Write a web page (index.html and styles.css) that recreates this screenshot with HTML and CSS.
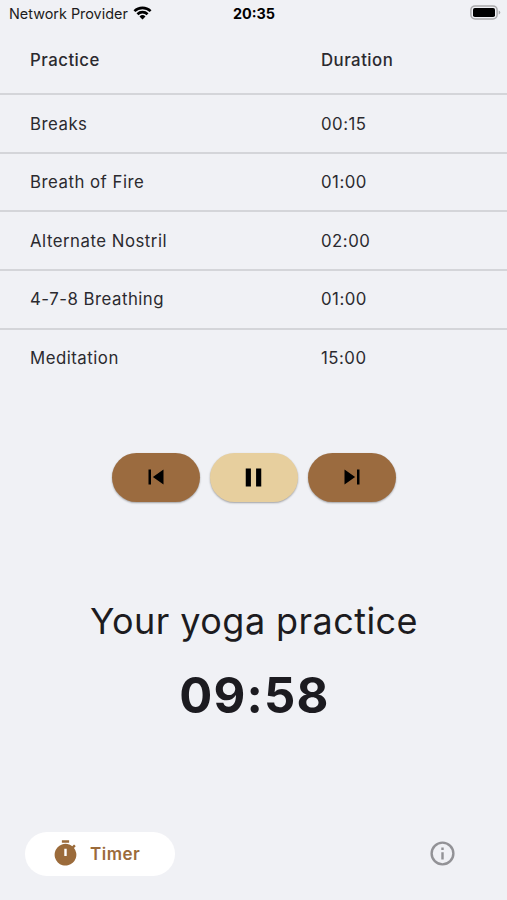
FILE: index.html
```html
<!DOCTYPE html>
<html lang="en">
<head>
<meta charset="utf-8">
<title>Yoga timer</title>
<link rel="stylesheet" href="styles.css">
</head>
<body>
<header class="status">
  <div class="carrier"><span class="carrier-name">Network Provider</span>
    <svg width="19" height="14" viewBox="0 0 18 14"><path d="M0 4.200a13 13 0 0 1 18 0l-1.800 1.900a10.300 10.300 0 0 0-14.400 0zM3 7.300a8.600 8.600 0 0 1 12 0l-1.900 1.900a5.900 5.900 0 0 0-8.200 0zM6 10.400a4.300 4.300 0 0 1 6 0l-3 3z"/></svg>
  </div>
  <span class="clock">20:35</span>
  <svg class="battery" width="31" height="15" viewBox="0 0 31 15"><rect x=".9" y=".9" width="26.200" height="13" rx="4.200" fill="none" stroke="#a9a9ab" stroke-width="1.500"/><rect x="3" y="3" width="22" height="9" rx="1.800"/><path d="M28.700 5.500v4q1.600-.5 1.600-2t-1.600-2z" fill="#a9a9ab"/></svg>
</header>
<main>
  <table class="practices">
    <thead><tr><th>Practice</th><th>Duration</th></tr></thead>
    <tbody>
      <tr><td>Breaks</td><td>00:15</td></tr>
      <tr><td>Breath of Fire</td><td>01:00</td></tr>
      <tr><td>Alternate Nostril</td><td>02:00</td></tr>
      <tr><td>4-7-8 Breathing</td><td>01:00</td></tr>
      <tr><td>Meditation</td><td>15:00</td></tr>
    </tbody>
  </table>
  <div class="controls">
    <button class="control" aria-label="Previous"><svg width="30" height="30" viewBox="0 0 24 24"><path d="M6 6h2v12H6zm3.500 6l8.500 6V6z"/></svg></button>
    <button class="control current" aria-label="Pause"><svg width="31" height="31" viewBox="0 0 24 24"><path d="M6 19h4V5H6zM14 5v14h4V5z"/></svg></button>
    <button class="control" aria-label="Next"><svg width="30" height="30" viewBox="0 0 24 24"><path d="M6 18l8.500-6L6 6zM16 6h2v12h-2z"/></svg></button>
  </div>
  <h1 class="title">Your yoga practice</h1>
  <div class="remaining">09:58</div>
</main>
<nav class="tabs">
  <a class="tab"><svg width="29" height="29" viewBox="0 0 24 24"><path d="M9 1h6v2H9zM19.030 7.390l1.420-1.420c-.43-.51-.9-.99-1.410-1.410l-1.420 1.420A9 9 0 1 0 19.030 7.390zM13 14h-2V8h2z"/></svg><span>Timer</span></a>
  <svg class="info" width="29" height="29" viewBox="0 0 24 24"><path d="M11 7h2v2h-2zm0 4h2v6h-2zm1-9a10 10 0 1 0 0 20 10 10 0 0 0 0-20zm0 18a8 8 0 1 1 0-16 8 8 0 0 1 0 16z"/></svg>
</nav>
</body>
</html>
```
FILE: styles.css
```css
* { box-sizing: border-box; }
body { margin: 0; width: 507px; height: 900px; display: flex; flex-direction: column; overflow: hidden; background: #f0f1f5; color: #1c1b20; font-family: Inter, sans-serif; }
svg { display: block; }
.status { height: 26px; flex: none; display: grid; grid-template-columns: 1fr auto 1fr; align-items: center; padding: 1px 6px 0 9px; color: #000; font-size: 14.400px; }
.carrier { display: flex; align-items: center; gap: 5px; white-space: nowrap; }
.carrier-name { color: #1c1b20; }
.carrier svg { margin-top: -2px; }
.clock { font-weight: 700; margin-right: 2px; }
.battery { justify-self: end; margin-top: -2px; }
main { flex: 1; }
.practices { width: 100%; border-collapse: collapse; table-layout: fixed; font-size: 16.800px; letter-spacing: .5px; }
.practices th, .practices td { height: 58.600px; padding: 0; text-align: left; font-weight: 400; color: #2b2a2f; }
.practices th { height: 68.300px; font-weight: 500; }
.practices th:first-child { width: 321px; }
.practices th:first-child, .practices td:first-child { padding-left: 30px; }
.practices tbody tr { border-top: 2px solid #d4d5d9; }
.controls { display: flex; justify-content: center; gap: 10px; margin-top: 65.700px; }
.control { width: 88px; height: 49px; border: 0; border-radius: 25px; padding: 0; display: grid; place-items: center; background: #9b6b3f; box-shadow: 0 1px 2px #0005; }
.current { background: #e7cf9e; }
.title { margin: 96px 0 0; padding-left: 1px; text-align: center; font-size: 36px; line-height: 46px; font-weight: 400; letter-spacing: .44px; }
.remaining { margin-top: 20px; padding-left: 2px; text-align: center; font-size: 49px; line-height: 63px; font-weight: 700; letter-spacing: 1.200px; }
.tabs { height: 68px; flex: none; display: flex; justify-content: space-between; align-items: flex-start; padding: 0 50px 0 25px; }
.tab { width: 150px; height: 44px; border-radius: 22px; background: #fff; display: flex; align-items: center; padding-left: 26px; gap: 10px; color: #9b6b3b; font-size: 17px; font-weight: 600; letter-spacing: .5px; }
.tab svg { fill: currentColor; margin-top: -2px; }
.info { margin-top: 7px; fill: #929296; }
```
